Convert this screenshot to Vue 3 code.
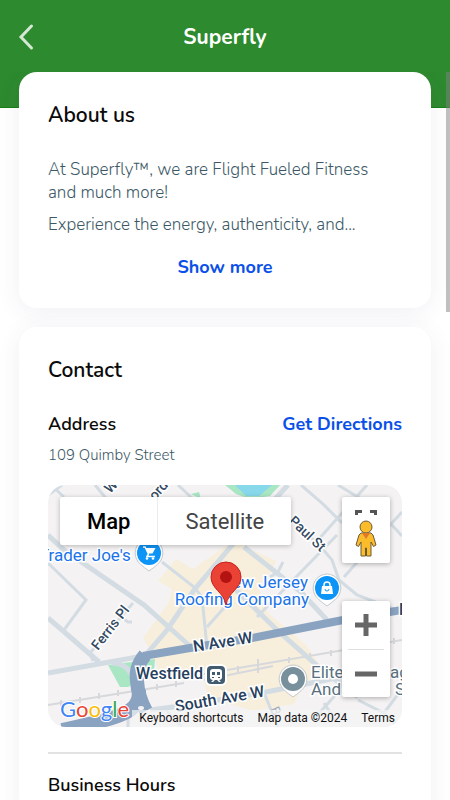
<template>
  <div class="page">
    <header class="header">
      <button class="back-btn" aria-label="Back">
        <svg width="16" height="28" viewBox="0 0 16 28">
          <path d="M13.5 3 L3 14 L13.5 25" />
        </svg>
      </button>
      <h1 class="title">Superfly</h1>
    </header>

    <main class="content">
      <section class="card">
        <h2 class="card-title">About us</h2>
        <div class="about">
          <p>At Superfly™, we are Flight Fueled Fitness and much more!</p>
          <p>Experience the energy, authenticity, and...</p>
        </div>
        <button class="link-btn">Show more</button>
      </section>

      <section class="card">
        <h2 class="card-title">Contact</h2>
        <div class="row">
          <h3 class="sub-title">Address</h3>
          <a href="#" class="directions">Get Directions</a>
        </div>
        <p class="address">109 Quimby Street</p>

        <div class="map">
          <svg class="map-canvas" viewBox="0 0 354 242" preserveAspectRatio="xMidYMid slice">
            <rect width="354" height="242" fill="#f4f2f3" />
            <path class="area" d="M182 58 L190 58 L228 76 L222 88 L210 100 L216 120 L222 130 L258 160 L273 182 L252 206 L246 219 L205 226 L160 212 L154 190 L112 190 L106 172 L95 153 L121 117 L124 104 L110 96 L128 74 L145 84 Z" />
            <path class="park" d="M177 0 L232 0 L222 11 L202 14 L188 9 Z M60 180 L107 174 L106 187 L90 196 L80 202 L72 202 Z M143 9 L151 7 L153 14 Z" />
            <path class="water" d="M187 0 L224 0 L211 11 L198 11 Z" />

            <g class="rail">
              <path d="M0 220 L136 198 M156 189 L354 155" />
              <path d="M156 195 L225 181 M13 215 v6 M32 212 v6 M51 208 v6 M70 205 v6 M109 199 v6 M128 196 v6 M190 181 v8 M210 174 v14 M241 172 v6 M262 168 v7 M283 165 v6 M346 153 v6" />
            </g>

            <g class="roads">
              <path v-for="(d, i) in roads" :key="i" :d="d" />
            </g>
            <g class="roads wide">
              <path v-for="(d, i) in wideRoads" :key="i" :d="d" />
            </g>
            <path class="highway" d="M95 171 L142 163 L204 153 L295 135 L354 125" />
            <path class="highway thick" d="M97 170 Q87 182 89 196 Q90 212 98 226" />
            <path class="highway thick" d="M91 205 C92 228 74 232 14 245" />
            <ellipse cx="93" cy="223" rx="3" ry="2" fill="#f4f2f3" />

            <g class="street">
              <text transform="translate(62 9) rotate(-45)">W</text>
              <text transform="translate(107 16) rotate(-48)">ord</text>
              <text transform="translate(240 37) rotate(43)">Paul St</text>
              <text transform="translate(50 166) rotate(-52)">Ferris Pl</text>
            </g>
            <g class="street major">
              <text transform="translate(146 167) rotate(-9)">N Ave W</text>
              <text transform="translate(128 227) rotate(-10)">South Ave W</text>
              <text x="351" y="130">N</text>
              <text x="88" y="194">Westfield</text>
            </g>
            <text class="faded" transform="translate(222 224) rotate(66)">Br</text>

            <g class="poi">
              <text x="-9" y="76">Trader Joe's</text>
              <text x="260" y="103" text-anchor="end">New Jersey</text>
              <text x="261" y="120" text-anchor="end">Roofing Company</text>
            </g>
            <g class="poi grey">
              <text x="263" y="193">Elite</text>
              <text x="342" y="193">ag</text>
              <text x="263" y="210">And</text>
              <text x="347" y="210">S</text>
            </g>

            <!-- train station -->
            <rect x="157" y="179" width="22" height="22" rx="6" fill="#fff" />
            <rect x="159" y="181" width="18" height="18" rx="4" fill="#415c70" />
            <path d="M165 184 h6 q3 0 3 3 v5 q0 3 -3 3 l2 2 h-2 l-2 -2 h-2 l-2 2 h-2 l2 -2 q-3 0 -3 -3 v-5 q0 -3 3 -3z" fill="#fff" />
            <path d="M164 187 h3 v3 h-3z M169 187 h3 v3 h-3z M164 192 h2 v1 h-2z M170 192 h2 v1 h-2z" fill="#415c70" />

            <!-- store pins -->
            <g transform="translate(101 68)">
              <path class="pin-edge" d="M0 -14 A14 14 0 0 1 12 7 Q10 11 0 18 Q-10 11 -12 7 A14 14 0 0 1 0 -14Z" />
              <circle r="12" fill="#0d94f7" />
              <path d="M-6 -6 h2 l3.5 7 -1.5 2.5 h8" fill="none" stroke="#fff" stroke-width="1.5" />
              <path d="M-3.5 -5 h10 l-3 5.5 h-4.5z" fill="#fff" />
              <circle cx="-2" cy="5.5" r="1.3" fill="#fff" />
              <circle cx="4" cy="5.5" r="1.3" fill="#fff" />
            </g>
            <g transform="translate(279 103)">
              <path class="pin-edge" d="M0 -14 A14 14 0 0 1 12 7 Q10 11 0 18 Q-10 11 -12 7 A14 14 0 0 1 0 -14Z" />
              <circle r="12" fill="#0d94f7" />
              <path d="M-5 -2 h10 l1 8 h-12z" fill="#fff" />
              <path d="M-3 -2 v-1 a3 3 0 0 1 6 0 v1" fill="none" stroke="#fff" stroke-width="1.5" />
              <path d="M-2 1 a2 2 0 0 0 4 0" fill="none" stroke="#0d94f7" stroke-width="1" />
            </g>
            <g transform="translate(245 194)">
              <path class="pin-edge" d="M0 -14 A14 14 0 0 1 12 7 Q10 11 0 18 Q-10 11 -12 7 A14 14 0 0 1 0 -14Z" />
              <circle r="12" fill="#78909c" />
              <circle r="5" fill="#fff" />
            </g>

            <!-- selected place -->
            <path d="M178 77 A15 15 0 0 1 193 92 C193 104 180 107 178 120 C176 107 163 104 163 92 A15 15 0 0 1 178 77Z" fill="#ea4335" stroke="#c5221f" stroke-width="1" />
            <circle cx="178" cy="92" r="6" fill="#b31412" />
          </svg>

          <div class="map-types">
            <button class="active">Map</button>
            <button>Satellite</button>
          </div>

          <div class="view-tools">
            <button class="fullscreen" aria-label="Toggle fullscreen view">
              <svg width="22" height="5" viewBox="0 0 22 5">
                <path d="M1.5 5 V1.5 H7 M15 1.5 H20.5 V5" fill="none" stroke="#555" stroke-width="3" />
              </svg>
            </button>
            <button class="pegman" aria-label="Street View">
              <svg width="22" height="38" viewBox="0 0 22 38">
                <path d="M6 13 H16 L18 15 L21 25 L18.5 26.5 L16 22 V36 H11.5 V28 H10.5 V36 H6 V22 L3.5 26.5 L1 25 L4 15 Z" fill="#fbbc2c" stroke="#6b5a3a" stroke-width="1" />
                <circle cx="11" cy="7" r="6" fill="#fbbc2c" stroke="#6b5a3a" stroke-width="1" />
                <path d="M7 13 H15 L11 19Z" fill="#e07a28" />
              </svg>
            </button>
          </div>

          <div class="zoom">
            <button aria-label="Zoom in">
              <svg width="22" height="22" viewBox="0 0 22 22"><path d="M0 11 H22 M11 0 V22" /></svg>
            </button>
            <button aria-label="Zoom out">
              <svg width="22" height="22" viewBox="0 0 22 22"><path d="M0 11 H22" /></svg>
            </button>
          </div>

          <a href="#" class="google" aria-label="Google Maps">
            <svg width="76" height="30" viewBox="0 0 76 30">
              <text x="2" y="22">
                <tspan v-for="(l, i) in logo" :key="i" :class="l.color">{{ l.char }}</tspan>
              </text>
            </svg>
          </a>
          <div class="map-footer">
            <button>Keyboard shortcuts</button>
            <span>Map data ©2024</span>
            <a href="#">Terms</a>
          </div>
        </div>

        <hr class="divider" />
        <h3 class="sub-title">Business Hours</h3>
      </section>
    </main>
    <div class="scrollbar"></div>
  </div>
</template>

<script setup>
const logo = [
  { char: 'G', color: 'blue' },
  { char: 'o', color: 'red' },
  { char: 'o', color: 'yellow' },
  { char: 'g', color: 'blue' },
  { char: 'l', color: 'green' },
  { char: 'e', color: 'red' }
]

const roads = [
  'M0 78 L38 115 L16 145',
  'M85 118 L42 168 L45 176 M76 134 l4 3 h4',
  'M0 10 L14 0 M3 0 L16 12 M47 0 L57 12 L42 24 M130 0 L145 14',
  'M114 77 L146 102 L154 112 L159 162',
  'M183 115 L159 142',
  'M235 77 L230 87 L222 92',
  'M253 0 L274 18 L294 38 M290 0 L313 14 M319 0 L270 55',
  'M243 33 L273 62 L284 75 L291 95 L309 110 L354 127',
  'M289 50 L209 132',
  'M354 27 L343 39 L296 92 M343 39 L354 51',
  'M265 235 L292 205 M276 218 L287 235 M217 210 L230 242',
  'M310 215 L336 228 L354 204 M336 228 L350 242',
  'M80 228 V242 M118 225 L134 242'
]

const wideRoads = [
  'M0 50 L16 65 L96 120 L143 162',
  'M0 133 L51 177',
  'M0 188 L95 171',
  'M64 178 Q80 178 86 195',
  'M240 0 L186 58 L146 105 L119 145 L96 172',
  'M196 62 L253 107 L279 135',
  'M181 98 L229 145 L272 183 L310 212',
  'M102 225 L140 220 L213 208 L293 192'
]
</script>

<style>
body {
  margin: 0;
}
</style>

<style scoped>
.page {
  position: relative;
  height: 100vh;
  display: flex;
  flex-direction: column;
  overflow: hidden;
  background: #fff;
  font-family: Nunito, "Nunito Sans", Lato, sans-serif;
  color: #0a0a0a;
}

h1, h2, h3, p {
  margin: 0;
}

button {
  border: 0;
  padding: 0;
  background: none;
  font-family: inherit;
  cursor: pointer;
}

a {
  text-decoration: none;
}

.header {
  flex: none;
  display: grid;
  grid-template-columns: 48px 1fr 48px;
  align-items: center;
  height: 73px;
  padding-bottom: 34px;
  background: #2d8a2e;
  border-bottom: 1px solid #148014;
}

.back-btn {
  display: flex;
  padding-left: 18px;
}

.back-btn path {
  fill: none;
  stroke: #d5e8d5;
  stroke-width: 3;
  stroke-linecap: round;
}

.title {
  font-size: 21px;
  line-height: 28px;
  font-weight: 700;
  color: #fff;
  text-align: center;
}

.content {
  position: relative;
  flex: 1;
  min-height: 0;
  display: flex;
  flex-direction: column;
  gap: 19px;
  margin-top: -36px;
  padding: 0 19px;
  overflow-y: auto;
  scrollbar-width: none;
}

.card {
  flex: none;
  padding: 29px;
  border-radius: 18px;
  background: #fff;
  box-shadow: 0 4px 24px rgba(60, 60, 110, 0.08);
}

.card-title {
  font-size: 21px;
  line-height: 28px;
  font-weight: 600;
}

.about {
  margin-top: 29px;
  padding-right: 8px;
  font-size: 17px;
  line-height: 23px;
  font-weight: 300;
  color: #3c5866;
}

.about p + p {
  margin-top: 9px;
}

.link-btn {
  display: block;
  margin: 19px auto 0;
  font-size: 18px;
  line-height: 24px;
  font-weight: 700;
  color: #0b50e8;
}

.row {
  display: flex;
  justify-content: space-between;
  align-items: center;
  margin-top: 28px;
}

.sub-title,
.directions {
  font-size: 18px;
  line-height: 24px;
  font-weight: 600;
}

.directions {
  font-weight: 700;
  color: #0b50e8;
}

.address {
  margin-top: 9px;
  font-size: 15px;
  line-height: 20px;
  font-weight: 300;
  color: #3c5866;
}

.map {
  position: relative;
  height: 242px;
  margin-top: 20px;
  border-radius: 18px;
  overflow: hidden;
  font-family: Roboto, sans-serif;
}

.map-canvas {
  display: block;
  width: 100%;
  height: 100%;
}

.area {
  fill: #f7efdc;
}

.park {
  fill: #a9e6c4;
}

.water {
  fill: #86d8ea;
}

.roads path {
  fill: none;
  stroke: #d3dce3;
  stroke-width: 3;
}

.roads.wide path {
  stroke-width: 5;
}

.rail path {
  fill: none;
  stroke: #d6d8dc;
  stroke-width: 2;
}

.highway {
  fill: none;
  stroke: #8aa3c1;
  stroke-width: 8;
}

.highway.thick {
  stroke-width: 14;
}

.street text {
  font-size: 14px;
  font-weight: 500;
  fill: #344a62;
  stroke: #fff;
  stroke-width: 3;
  paint-order: stroke;
}

.street.major text {
  font-size: 16px;
  fill: #26405e;
}

.poi text {
  font-size: 17px;
  fill: #1a73e8;
  stroke: #fff;
  stroke-width: 3;
  paint-order: stroke;
}

.poi.grey text {
  fill: #587080;
}

.faded {
  font-size: 13px;
  fill: #a3adb5;
}

.pin-edge {
  fill: #fff;
  stroke: #c4c9cd;
  stroke-width: 1;
}

.map-types {
  position: absolute;
  top: 12px;
  left: 12px;
  display: flex;
  border-radius: 2px;
  background: #fff;
  box-shadow: 0 1px 5px rgba(0, 0, 0, 0.25);
}

.map-types button {
  height: 48px;
  padding: 0 27px;
  font-size: 22px;
  color: #444;
}

.map-types .active {
  font-weight: 500;
  color: #000;
}

.map-types button + button {
  border-left: 1px solid #ececec;
}

.view-tools,
.zoom {
  position: absolute;
  right: 12px;
  display: flex;
  flex-direction: column;
  width: 48px;
  border-radius: 2px;
  background: #fff;
  box-shadow: 0 1px 5px rgba(0, 0, 0, 0.3);
}

.view-tools {
  top: 12px;
}

.view-tools button {
  display: flex;
  justify-content: center;
}

.fullscreen {
  height: 18px;
  padding-top: 13px;
  box-sizing: border-box;
}

.pegman {
  height: 48px;
  align-items: center;
}

.zoom {
  top: 116px;
}

.zoom button {
  display: grid;
  place-items: center;
  height: 48px;
}

.zoom button + button {
  margin: 0 6px;
  border-top: 1px solid #e0e0e0;
}

.zoom path {
  stroke: #666;
  stroke-width: 5;
}

.google {
  position: absolute;
  left: 10px;
  bottom: 2px;
}

.google svg {
  display: block;
}

.google text {
  font-family: Lato, sans-serif;
  font-size: 22px;
  stroke: #fff;
  stroke-width: 2;
  paint-order: stroke;
}

.google .blue {
  fill: #4285f4;
}

.google .red {
  fill: #ea4335;
}

.google .yellow {
  fill: #fbbc05;
}

.google .green {
  fill: #34a853;
}

.map-footer {
  position: absolute;
  right: 0;
  bottom: 0;
  display: flex;
  gap: 14px;
  padding: 0 7px;
  background: rgba(245, 245, 245, 0.7);
  font-size: 12px;
  line-height: 17px;
  color: #111;
}

.map-footer button,
.map-footer a {
  font-size: 12px;
  line-height: 17px;
  color: #111;
}

.divider {
  height: 2px;
  margin: 25px 0 19px;
  border: 0;
  background: #e2e2e2;
}

.scrollbar {
  position: absolute;
  top: 72px;
  right: 0;
  width: 4px;
  height: 30%;
  background: rgba(128, 128, 128, 0.5);
}
</style>
